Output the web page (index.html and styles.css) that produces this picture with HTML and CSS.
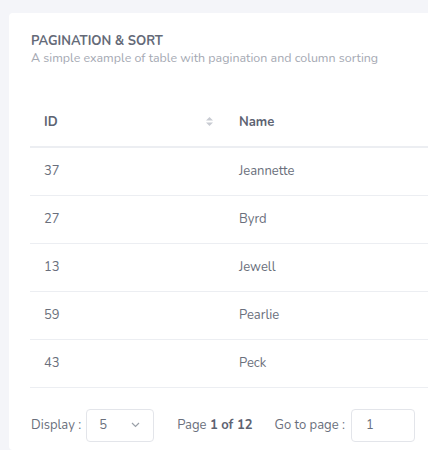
FILE: index.html
```html
<!DOCTYPE html>
<html lang="en">
<head>
<meta charset="utf-8">
<title>Pagination &amp; Sort</title>
<link rel="stylesheet" href="styles.css">
</head>
<body>
<div class="page">
  <div class="card">
    <div class="card-head">
      <h2 class="card-title">PAGINATION &amp; SORT</h2>
      <p class="card-sub">A simple example of table with pagination and column sorting</p>
    </div>
    <table class="tbl">
      <thead>
        <tr>
          <th class="col-id"><div class="th-in"><span>ID</span>
            <svg class="sort" width="7" height="9" viewBox="0 0 7 9"><path d="M3.5 0L7 3.5H0Z" fill="#c8cbd2"/><path d="M3.5 9L7 5.5H0Z" fill="#c8cbd2"/></svg></div></th>
          <th class="col-name">Name</th>
        </tr>
      </thead>
      <tbody>
        <tr><td>37</td><td>Jeannette</td></tr>
        <tr><td>27</td><td>Byrd</td></tr>
        <tr><td>13</td><td>Jewell</td></tr>
        <tr><td>59</td><td>Pearlie</td></tr>
        <tr><td>43</td><td>Peck</td></tr>
      </tbody>
    </table>
    <div class="footer">
      <span class="lbl">Display :</span>
      <div class="select"><span>5</span>
        <svg width="9" height="6" viewBox="0 0 9 6"><path d="M1 1l3.5 3.5L8 1" fill="none" stroke="#9aa0a8" stroke-width="1.2"/></svg>
      </div>
      <span class="pageinfo">Page <b>1 of 12</b></span>
      <span class="lbl goto">Go to page :</span>
      <div class="input">1</div>
    </div>
  </div>
</div>
</body>
</html>
```
FILE: styles.css
```css
html, body {
  margin: 0;
  padding: 0;
  background: #f4f5f9;
  font-family: "Nunito", "Lato", "Open Sans", sans-serif;
}
.page {
  padding: 13px 0 0 9px;
  width: 440px;
  height: 450px;
  box-sizing: border-box;
  overflow: hidden;
}
.card {
  background: #fff;
  border-radius: 4px;
  padding: 19px 21px 0 21px;
  height: 437px;
  box-sizing: border-box;
}
.card-head {
  padding-left: 1px;
}
.card-title {
  margin: 0;
  font-size: 13px;
  font-weight: 700;
  color: #646a78;
  line-height: 18px;
}
.card-sub {
  margin: 0;
  font-size: 12.45px;
  color: #a5a9b3;
  line-height: 15px;
}
.tbl {
  margin-top: 32px;
  width: 410px;
  border-collapse: collapse;
  font-size: 13px;
}
.tbl th {
  text-align: left;
  font-weight: 700;
  color: #5d6372;
  height: 50px;
  padding: 0 14px;
  border-bottom: 2px solid #eceef2;
  box-sizing: border-box;
}
.col-id { width: 195px; }
.th-in {
  display: flex;
  align-items: center;
  justify-content: space-between;
}
.sort { margin-right: -2px; }
.tbl td {
  height: 48px;
  padding: 0 14px;
  color: #6a6f7c;
  border-bottom: 1px solid #eceef2;
  box-sizing: border-box;
}
.footer {
  display: flex;
  align-items: center;
  margin-top: 21px;
  font-size: 13px;
  color: #6a6f7c;
  padding-left: 1px;
}
.select {
  margin-left: 5px;
  width: 68px;
  height: 33px;
  box-sizing: border-box;
  border: 1px solid #e3e5ea;
  border-radius: 4px;
  display: flex;
  align-items: center;
  justify-content: space-between;
  padding: 0 13px 0 12px;
}
.pageinfo { margin-left: 23px; }
.pageinfo b { font-weight: 700; color: #5d6372; }
.goto { margin-left: 22px; }
.input {
  margin-left: 6px;
  width: 64px;
  height: 33px;
  box-sizing: border-box;
  border: 1px solid #e3e5ea;
  border-radius: 4px;
  display: flex;
  align-items: center;
  padding-left: 14px;
}
```
